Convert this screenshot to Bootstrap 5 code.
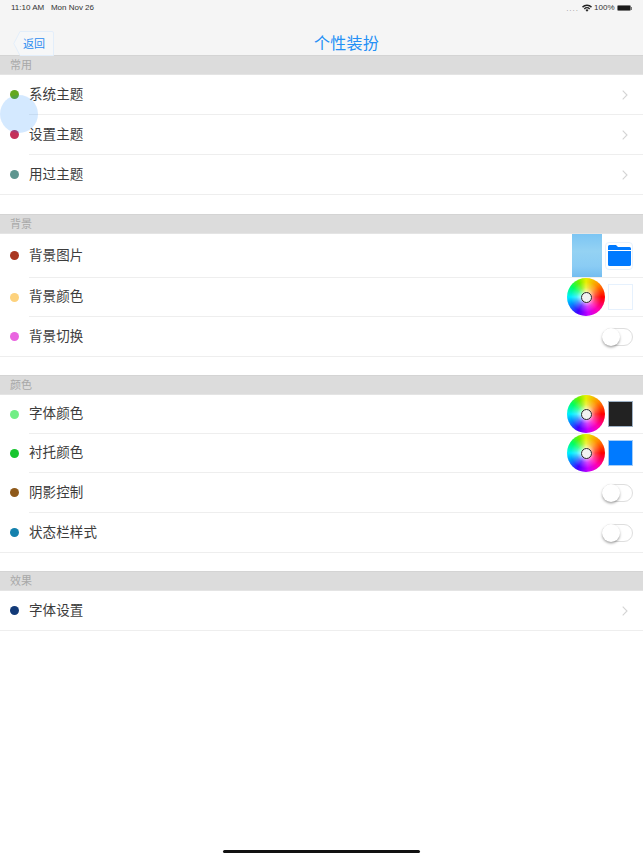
<!DOCTYPE html>
<html lang="zh-CN">
<head>
<meta charset="utf-8">
<title>个性装扮</title>
<link href="https://cdn.jsdelivr.net/npm/bootstrap@5.3.0/dist/css/bootstrap.min.css" rel="stylesheet">
<style>
html,body{background:#fff;height:858px;overflow:hidden}
body{font-family:"Liberation Sans","Noto Sans CJK SC",sans-serif;position:relative;color:#3a3a3a}
.topbar{height:55px;background:#f5f5f5;position:relative}
.statusline{height:16px;padding:0 11px;font-size:8px;line-height:16px;color:#333;font-family:"Liberation Sans",sans-serif}
.dots{color:#999;letter-spacing:1px;margin-right:3px;line-height:1;position:relative;top:1px}
.pct{margin:0 2px 0 2px}
.battery{width:14px;height:6px;background:#1a1a1a;border:1px solid #777;border-radius:1.5px;display:block}
.batcap{width:1px;height:3px;background:#777;display:block;margin-left:.5px}
.back-shape{position:absolute;left:13px;top:31px}
.back-label{position:absolute;left:23px;top:37px;font-size:11px;line-height:15px;color:#2b8cf0}
.page-title{position:absolute;left:0;right:0;top:33px;padding-left:50px;text-align:center;font-size:16px;line-height:22px;color:#2490f5;letter-spacing:.2px}
.sect{height:20px;background:#dcdcdc;font-size:11px;line-height:19px;padding-left:10px;color:#a8a8a8;border-top:1px solid #d4d4d4;border-bottom:1px solid #e4e4e4}
.rowline{position:relative;display:flex;align-items:center;padding:0 10px 1px;background:#fff}
.rowline::after{content:"";position:absolute;left:29px;right:0;bottom:0;height:1px;background:#eeeeee}
.rowline.tail::after{left:0}
.h40{height:40px}.h39{height:39px}.h44{height:44px}
.spot{width:9px;height:9px;border-radius:50%;flex:none}
.rowtext{font-size:13.5px;line-height:18px;margin-left:10px;color:#3c3c3c;letter-spacing:.1px}
.gapband{height:19px;background:#fff}
.gapband.slim{height:18px}
.chev{margin-left:auto;margin-right:5px}
.endgroup{margin-left:auto;display:flex;align-items:center}
.photo{width:30px;height:43px;background:linear-gradient(180deg,#7cc5f3,#94d2f3 40%,#8accf4 75%,#74bdf0);margin-right:3px}
.folderbox{width:28px;height:28px;border:1px solid #e6f1fd;border-radius:4px;display:flex;align-items:center;justify-content:center}
.wheel{width:38px;height:38px;border-radius:50%;background:radial-gradient(circle closest-side,#fff 0,rgba(255,255,255,.9) 12%,rgba(255,255,255,.25) 50%,rgba(255,255,255,0) 80%),conic-gradient(#e8f000,#ff9000 12%,#ff0000 25%,#ff00b0 38%,#c800ff 48%,#4000ff 58%,#0090ff 68%,#00f0ff 75%,#00ff60 85%,#70f000 93%,#e8f000);position:relative;margin-right:3px}
.wheel::after{content:"";position:absolute;left:13.5px;top:13.5px;width:11px;height:11px;border-radius:50%;border:1.5px solid #2a2a2a;background:#f2f2f2}
.swatch{width:25px;height:26px;border:1px solid #e6f1fd}
.swatch.dark{background:#222;border-color:#9fb2c6}
.swatch.blue{background:#007aff;border-color:#a5cdf7}
.toggle{width:31px;height:18px;border:1px solid #dedede;border-radius:9px;margin-left:auto;position:relative;background:#fff}
.toggle::before{content:"";position:absolute;left:-1px;top:-1px;width:18px;height:18px;border-radius:50%;background:#fff;box-shadow:0 1.5px 2.5px rgba(0,0,0,.35)}
.touchdot{position:absolute;left:0;top:94.5px;width:38px;height:38px;border-radius:50%;background:rgba(0,122,255,.17);z-index:2}
.homebar{position:absolute;left:223px;top:849.5px;width:197px;height:3.5px;border-radius:2px;background:#111}
</style>
</head>
<body>
<header class="topbar">
  <div class="statusline d-flex align-items-center">
    <span>11:10 AM</span><span class="statusdate">&nbsp;&nbsp;&nbsp;Mon Nov 26</span>
    <span class="ms-auto dots">....</span>
    <svg width="10" height="8" viewBox="0 0 10 8"><path d="M0 2.600a7.200 7.200 0 0 1 10 0L9 3.700a5.700 5.700 0 0 0-8 0zM1.800 4.400a4.600 4.600 0 0 1 6.400 0L7.200 5.400a3.200 3.200 0 0 0-4.400 0zM3.500 6.100a2.100 2.100 0 0 1 3 0L5 7.800z" fill="#222"/></svg>
    <span class="pct">100%</span>
    <span class="battery"></span><span class="batcap"></span>
  </div>
  <svg class="back-shape" width="42" height="25" viewBox="0 0 42 25" fill="none"><path d="M7 .5H39a1.500 1.500 0 0 1 1.500 1.500V24.500H7L.8 12.500z" stroke="#e3eefa" fill="#f6f7f8"/></svg>
  <span class="back-label">返回</span>
  <div class="page-title">个性装扮</div>
</header>

<main>
  <div class="sect">常用</div>
  <div class="rowline h40"><span class="spot" style="background:#63a81f"></span><span class="rowtext">系统主题</span>
    <svg class="chev" width="6" height="10" viewBox="0 0 6 10" fill="none"><path d="M.7.7 5 5 .7 9.300" stroke="#d4d4d4" stroke-width="1.100"/></svg></div>
  <div class="rowline h40"><span class="spot" style="background:#c5305a"></span><span class="rowtext">设置主题</span>
    <svg class="chev" width="6" height="10" viewBox="0 0 6 10" fill="none"><path d="M.7.7 5 5 .7 9.300" stroke="#d4d4d4" stroke-width="1.100"/></svg></div>
  <div class="rowline h40 tail"><span class="spot" style="background:#5e9690"></span><span class="rowtext">用过主题</span>
    <svg class="chev" width="6" height="10" viewBox="0 0 6 10" fill="none"><path d="M.7.7 5 5 .7 9.300" stroke="#d4d4d4" stroke-width="1.100"/></svg></div>
  <div class="gapband"></div>

  <div class="sect">背景</div>
  <div class="rowline h44"><span class="spot" style="background:#a93620"></span><span class="rowtext">背景图片</span>
    <div class="endgroup"><div class="photo"></div><div class="folderbox">
      <svg width="23" height="21" viewBox="0 0 23 21"><path d="M0 1.500A1.500 1.500 0 0 1 1.500 0H8l2 2h11.500A1.500 1.500 0 0 1 23 3.500V5H0z" fill="#007aff"/><path d="M0 6h23v13.500a1.500 1.500 0 0 1-1.500 1.500h-20A1.500 1.500 0 0 1 0 19.500z" fill="#007aff"/></svg>
    </div></div></div>
  <div class="rowline h39"><span class="spot" style="background:#fdd27d"></span><span class="rowtext">背景颜色</span>
    <div class="endgroup"><div class="wheel"></div><div class="swatch"></div></div></div>
  <div class="rowline h40 tail"><span class="spot" style="background:#e965e0"></span><span class="rowtext">背景切换</span><div class="toggle"></div></div>
  <div class="gapband slim"></div>

  <div class="sect">颜色</div>
  <div class="rowline h39"><span class="spot" style="background:#72ee86"></span><span class="rowtext">字体颜色</span>
    <div class="endgroup"><div class="wheel"></div><div class="swatch dark"></div></div></div>
  <div class="rowline h39"><span class="spot" style="background:#17c52e"></span><span class="rowtext">衬托颜色</span>
    <div class="endgroup"><div class="wheel"></div><div class="swatch blue"></div></div></div>
  <div class="rowline h40"><span class="spot" style="background:#8f5a1a"></span><span class="rowtext">阴影控制</span><div class="toggle"></div></div>
  <div class="rowline h40 tail"><span class="spot" style="background:#1481ad"></span><span class="rowtext">状态栏样式</span><div class="toggle"></div></div>
  <div class="gapband slim"></div>

  <div class="sect">效果</div>
  <div class="rowline h40 tail"><span class="spot" style="background:#123a78"></span><span class="rowtext">字体设置</span>
    <svg class="chev" width="6" height="10" viewBox="0 0 6 10" fill="none"><path d="M.7.7 5 5 .7 9.300" stroke="#d4d4d4" stroke-width="1.100"/></svg></div>
</main>

<div class="touchdot"></div>
<div class="homebar"></div>
<script src="https://cdn.jsdelivr.net/npm/bootstrap@5.3.0/dist/js/bootstrap.bundle.min.js"></script>
</body>
</html>
